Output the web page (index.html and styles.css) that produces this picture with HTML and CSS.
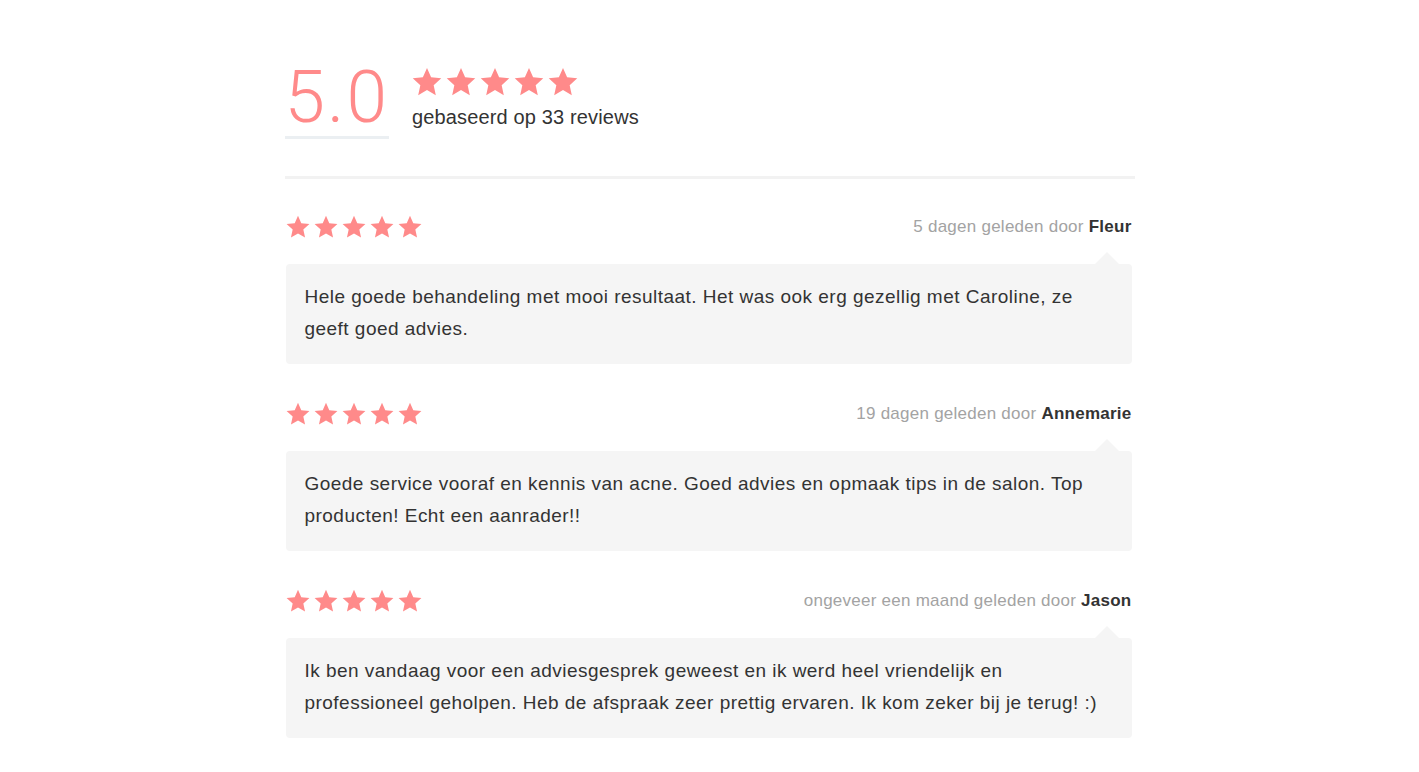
FILE: index.html
```html
<!DOCTYPE html>
<html>
    <head>
        <meta charset="UTF-8">
        <link rel="stylesheet" href="styles.css">
    </head>
    <body>
        <svg width="0" height="0" class="defs">
            <symbol id="star" viewBox="0 0 24 24">
                <polygon points="12,0.8 15.29,8.27 23.41,9.09 17.33,14.53 19.05,22.51 12,18.4 4.95,22.51 6.67,14.53 0.59,9.09 8.71,8.27"></polygon>
            </symbol>
        </svg>
        <div class="reviews">
            <!-- samenvatting -->
            <div class="summary">
                <div class="score">5.0</div>
                <div class="summary-info">
                    <div class="stars stars-big">
                        <svg><use href="#star"></use></svg>
                        <svg><use href="#star"></use></svg>
                        <svg><use href="#star"></use></svg>
                        <svg><use href="#star"></use></svg>
                        <svg><use href="#star"></use></svg>
                    </div>
                    <div class="count">gebaseerd op 33 reviews</div>
                </div>
            </div>

            <!-- losse reviews -->
            <div class="review-list">
                <div class="review">
                    <div class="review-head">
                        <div class="stars">
                            <svg><use href="#star"></use></svg>
                            <svg><use href="#star"></use></svg>
                            <svg><use href="#star"></use></svg>
                            <svg><use href="#star"></use></svg>
                            <svg><use href="#star"></use></svg>
                        </div>
                        <div class="meta">5 dagen geleden door <b>Fleur</b></div>
                    </div>
                    <div class="bubble">Hele goede behandeling met mooi resultaat. Het was ook erg gezellig met Caroline, ze geeft goed advies.</div>
                </div>
                <div class="review">
                    <div class="review-head">
                        <div class="stars">
                            <svg><use href="#star"></use></svg>
                            <svg><use href="#star"></use></svg>
                            <svg><use href="#star"></use></svg>
                            <svg><use href="#star"></use></svg>
                            <svg><use href="#star"></use></svg>
                        </div>
                        <div class="meta">19 dagen geleden door <b>Annemarie</b></div>
                    </div>
                    <div class="bubble">Goede service vooraf en kennis van acne. Goed advies en opmaak tips in de salon. Top producten! Echt een aanrader!!</div>
                </div>
                <div class="review">
                    <div class="review-head">
                        <div class="stars">
                            <svg><use href="#star"></use></svg>
                            <svg><use href="#star"></use></svg>
                            <svg><use href="#star"></use></svg>
                            <svg><use href="#star"></use></svg>
                            <svg><use href="#star"></use></svg>
                        </div>
                        <div class="meta">ongeveer een maand geleden door <b>Jason</b></div>
                    </div>
                    <div class="bubble">Ik ben vandaag voor een adviesgesprek geweest en ik werd heel vriendelijk en professioneel geholpen. Heb de afspraak zeer prettig ervaren. Ik kom zeker bij je terug! :)</div>
                </div>
            </div>
        </div>
    </body>
</html>
```

FILE: styles.css
```css
body {
    margin: 0;
    background: #ffffff;
    font-family: "Liberation Sans", Arial, sans-serif;
    color: #333333;
}

.defs {
    position: absolute;
}

.reviews {
    width: 850px;
    margin: 0 auto;
    padding-top: 61px;
}

/* samenvatting bovenaan */
.summary {
    display: flex;
    align-items: flex-start;
    padding-bottom: 37px;
    border-bottom: 3px solid #f2f2f2;
}

.score {
    font-family: "Roboto", "Liberation Sans", sans-serif;
    font-weight: 300;
    font-size: 73px;
    line-height: 72px;
    letter-spacing: 2px;
    color: #ff8a8a;
    padding-bottom: 3px;
    border-bottom: 3px solid #ebeff2;
}

.summary-info {
    margin-left: 23px;
    padding-top: 6px;
}

.count {
    margin-top: 8px;
    font-size: 20px;
    line-height: 24px;
    letter-spacing: 0.15px;
    color: #333333;
}

.stars {
    display: flex;
    gap: 4px;
}

.stars svg {
    width: 24px;
    height: 24px;
    fill: #ff8a8a;
}

.stars-big svg {
    width: 30px;
    height: 30px;
}

/* reviews */
.review-list {
    padding: 36px 3px 0 1px;
}

.review {
    margin-bottom: 38px;
}

.review-head {
    display: flex;
    justify-content: space-between;
    align-items: center;
    height: 24px;
    margin-bottom: 25px;
}

.meta {
    font-size: 17px;
    letter-spacing: 0.25px;
    color: #a3a3a3;
}

.meta b {
    color: #333333;
}

.bubble {
    position: relative;
    background: #f5f5f5;
    border-radius: 4px;
    padding: 17px 19px 19px;
    font-size: 19px;
    line-height: 32px;
    letter-spacing: 0.47px;
    color: #333333;
}

.bubble::before {
    content: "";
    position: absolute;
    top: -12px;
    right: 13px;
    border-left: 12px solid transparent;
    border-right: 12px solid transparent;
    border-bottom: 12px solid #f5f5f5;
}
```
